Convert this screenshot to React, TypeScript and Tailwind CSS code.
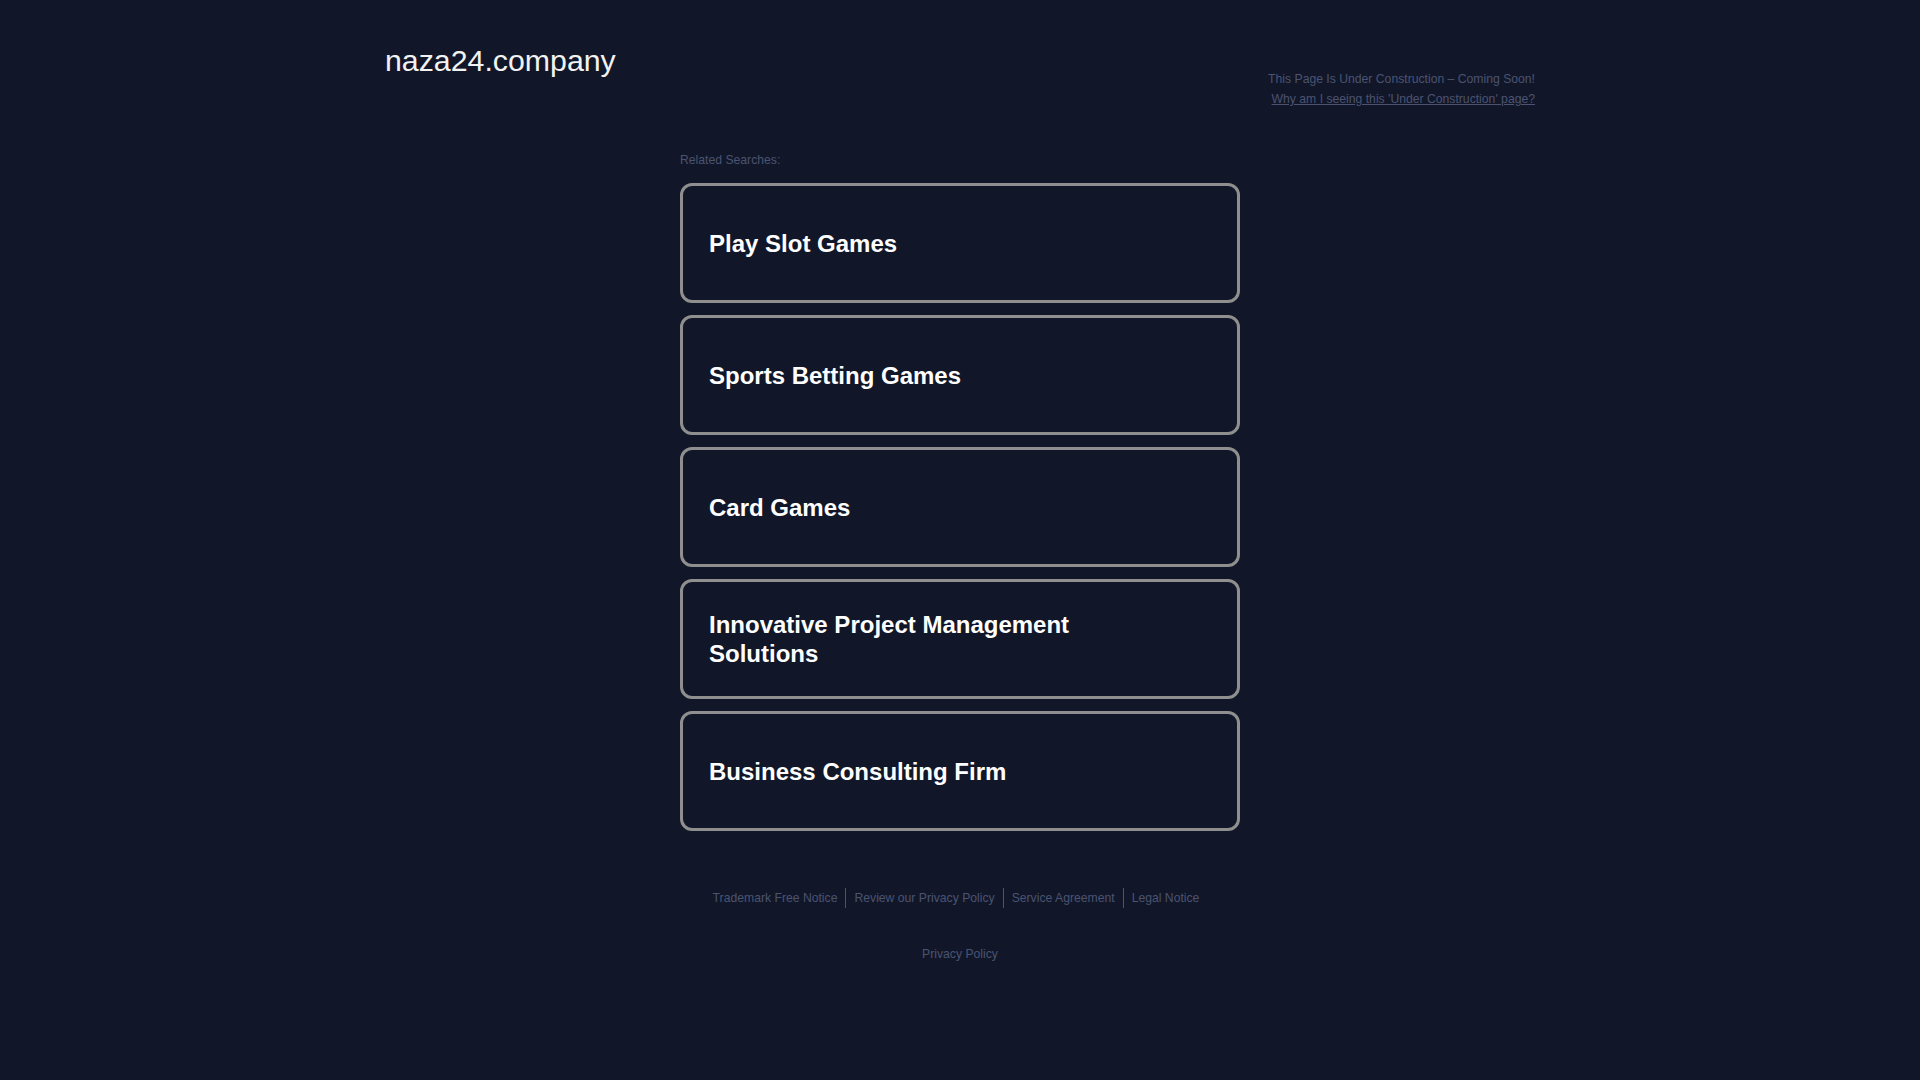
const searches = [
  'Play Slot Games',
  'Sports Betting Games',
  'Card Games',
  'Innovative Project Management Solutions',
  'Business Consulting Firm',
];

const footerLinks = ['Trademark Free Notice', 'Review our Privacy Policy', 'Service Agreement', 'Legal Notice'];

export default function App() {
  return (
    <div className="min-h-screen bg-[#111729] font-['Liberation_Sans',Arial,sans-serif]">
      <div className="mx-auto w-[1150px]">
        <header className="flex items-start justify-between pt-[40px]">
          <h1 className="text-[30.3px] leading-[42px] text-[#f2f2f2]">naza24.company</h1>
          <div className="mt-[29px] flex flex-col items-end text-[12.2px] leading-[20px] text-[#4b5371]">
            <span>This Page Is Under Construction – Coming Soon!</span>
            <a href="#" className="underline">
              Why am I seeing this 'Under Construction' page?
            </a>
          </div>
        </header>

        <main className="mx-auto mt-[44px] w-[560px]">
          <p className="text-[12.2px] leading-[14px] text-[#4b5371]">Related Searches:</p>
          <div className="mt-[16px] flex flex-col gap-[12px]">
            {searches.map((s) => (
              <a
                key={s}
                href="#"
                className="flex h-[120px] items-center rounded-[12px] border-[3px] border-[#8f8f8f] pl-[26px] pr-[87px]"
              >
                <span className="text-[24px] font-bold leading-[29px] text-white">{s}</span>
              </a>
            ))}
          </div>
        </main>

        <footer className="mt-[57px] flex flex-col items-center text-[12.2px] text-[#4b5371]">
          <div className="mr-[8px] flex items-center">
            {footerLinks.map((l, i) => (
              <a
                key={l}
                href="#"
                className={`px-[8px] leading-[20px] ${i > 0 ? 'border-l border-[#4b5371]' : ''}`}
              >
                {l}
              </a>
            ))}
          </div>
          <a href="#" className="mt-[36px] leading-[20px]">
            Privacy Policy
          </a>
        </footer>
      </div>
    </div>
  );
}
